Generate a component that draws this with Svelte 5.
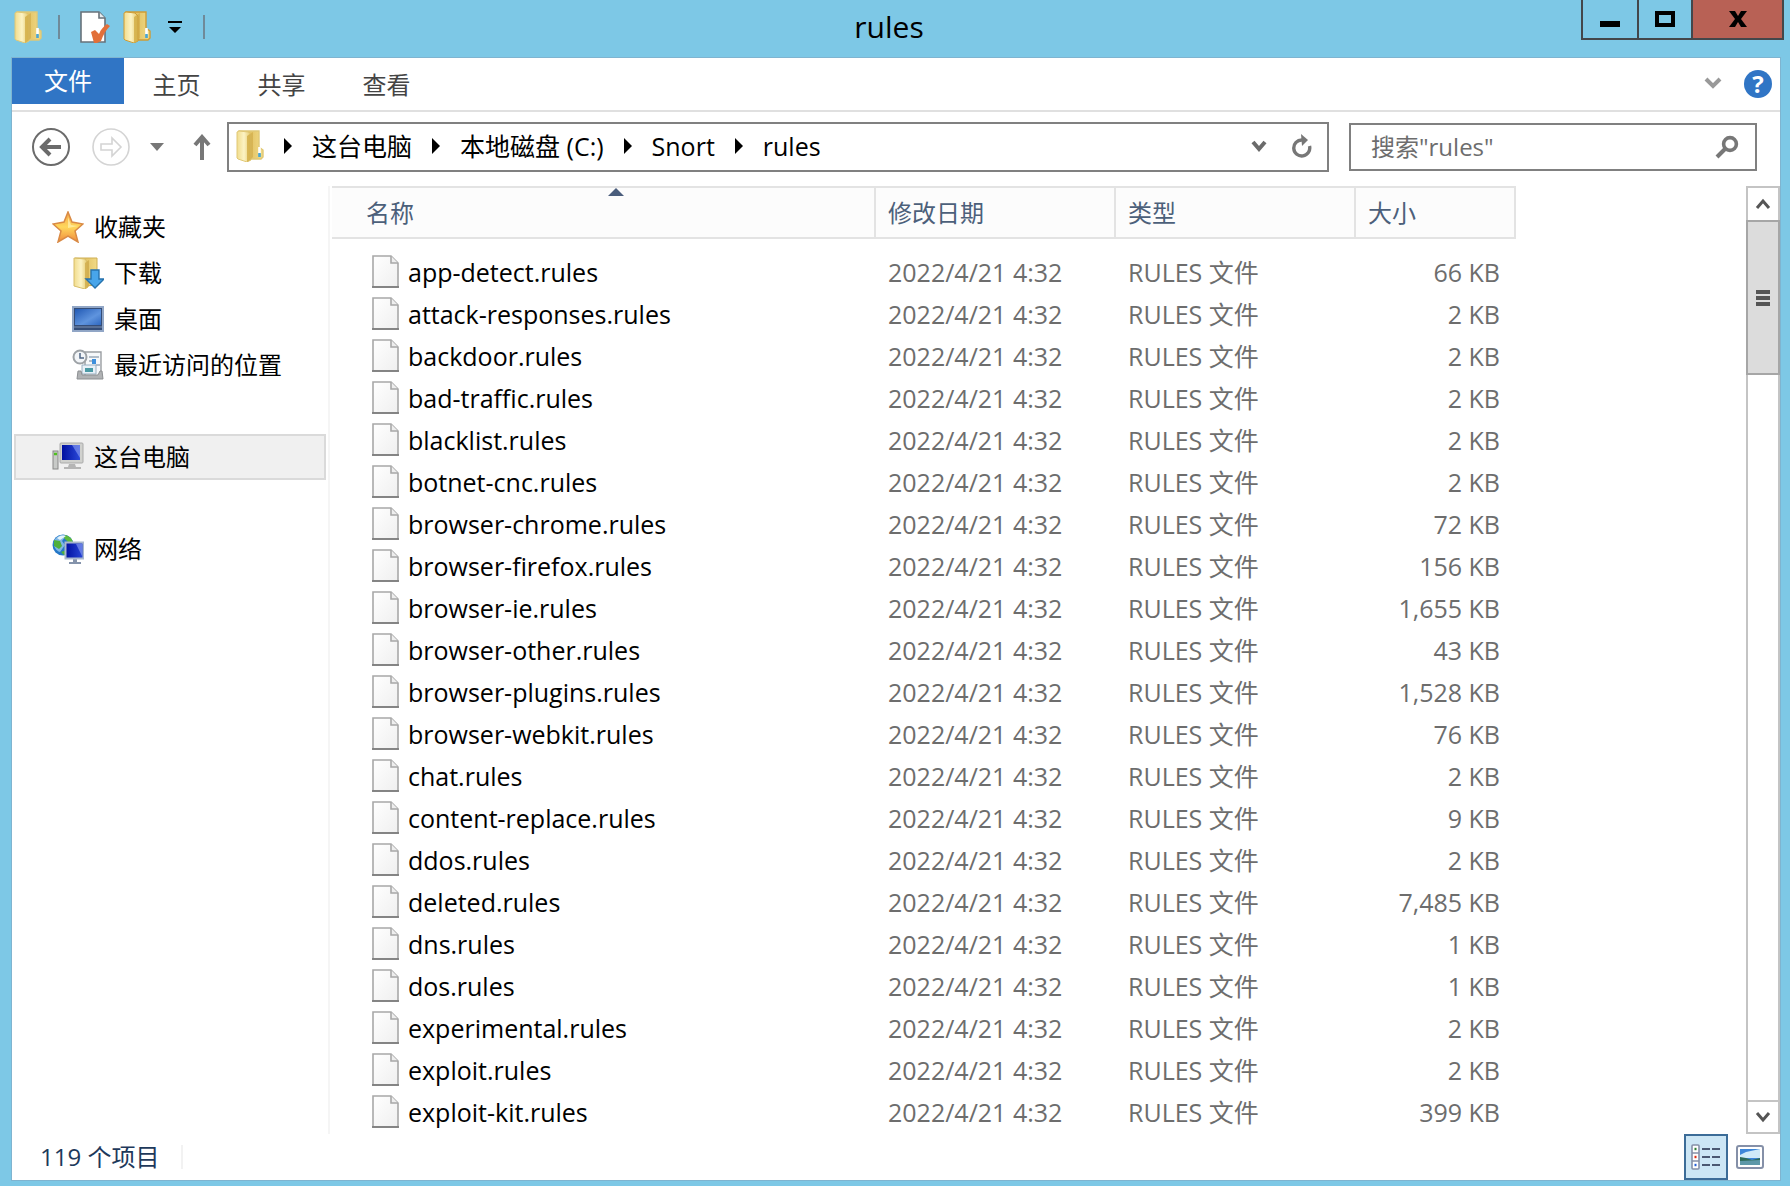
<script>
	const total = 119;
	const tabs = ["主页", "共享", "查看"];
	const path = ["这台电脑", "本地磁盘 (C:)", "Snort", "rules"];
	const views = ["details", "thumbs"];

	const groups = [
		[
			{ icon: "star", name: "收藏夹" },
			{ icon: "download", name: "下载", child: true },
			{ icon: "desktop", name: "桌面", child: true },
			{ icon: "recent", name: "最近访问的位置", child: true },
		],
		[{ icon: "computer", name: "这台电脑" }],
		[{ icon: "network", name: "网络" }],
	];

	const files = [
		["app-detect", "66"],
		["attack-responses", "2"],
		["backdoor", "2"],
		["bad-traffic", "2"],
		["blacklist", "2"],
		["botnet-cnc", "2"],
		["browser-chrome", "72"],
		["browser-firefox", "156"],
		["browser-ie", "1,655"],
		["browser-other", "43"],
		["browser-plugins", "1,528"],
		["browser-webkit", "76"],
		["chat", "2"],
		["content-replace", "9"],
		["ddos", "2"],
		["deleted", "7,485"],
		["dns", "1"],
		["dos", "1"],
		["experimental", "2"],
		["exploit", "2"],
		["exploit-kit", "399"],
	];

	let selected = $state("这台电脑");
	let view = $state("details");
	let query = $state("");

	// thumb shows how much of the folder fits in the window
	let thumb = $derived((files.length / total) * 100);
</script>

{#snippet folder(edge = "#e0c876")}
	<svg width="28" height="32" viewBox="0 0 28 32" aria-hidden="true">
		<path d="M3 1h20v16l4 3v7l-2 2H9l-6-1z" fill="url(#gold)" stroke={edge} stroke-width="1.4" />
		<path d="M1 2l2-1 9 1 3 3v25l-4 2-9-3-1-1z" fill="url(#cream)" stroke={edge} />
		<path d="M11 6l3-2v26l-3 2z" fill="#d2ac45" opacity=".8" />
		<path d="M14 4l3-2v25l-3 3z" fill="#c9a23c" opacity=".5" />
		<path d="M23.500 17v7" stroke="#fff" stroke-width="2.600" />
		<path d="M23.500 23v4" stroke="#4aa6d4" stroke-width="2.600" />
	</svg>
{/snippet}

{#snippet sideIcon(name)}
	<svg width="32" height="32" viewBox="0 0 32 32" aria-hidden="true">
		{#if name === "star"}
			<path d="M16 1l4 10 11 2-8 7 3 11-10-6-10 6 3-11-8-7 11-2z" fill="url(#amber)" stroke="#d98a45" stroke-width="1.5" />
			<path d="M16 6l3 8 7 1-10 2z" fill="#fff2b0" opacity=".7" />
		{:else if name === "download"}
			<path d="M3 1h22v27l-12 1-10-1z" fill="url(#gold)" stroke="#cfae52" />
			<path d="M2 1l11 1 3 4v24l-3 2-11-3z" fill="url(#cream)" stroke="#d8bd68" />
			<path d="M13 6l4-3v26l-4 3z" fill="#cfab4b" opacity=".8" />
			<path d="M19 13h8v9h5l-9 9-9-9h5z" fill="#48a5ea" stroke="#2672ad" stroke-width="1.4" />
		{:else if name === "desktop"}
			<rect x="1" y="4" width="30" height="24" fill="#344d78" stroke="#91a6c6" stroke-width="2" />
			<rect x="3" y="6" width="26" height="16" fill="url(#screen)" />
			<path d="M2 24h28" stroke="#7d91b0" />
		{:else if name === "recent"}
			<path d="M13 3h16v24H13z" fill="#f6f8fa" stroke="#9a9ea2" stroke-width="1.4" />
			<path d="M17 8h10M17 12h4M24 16h4" stroke="#9aa9b9" stroke-width="1.5" />
			<path d="M20 10h4v5h-4z" fill="#3d8fdc" />
			<path d="M10 16h14v9H10z" fill="#e8f1f8" stroke="#9ab0c2" />
			<path d="M13 19h8v4h-8z" fill="#4a9aa5" />
			<path d="M6 22h3l1 4h16l2-4h2l1 8H5z" fill="#b0b2b4" stroke="#8c8f92" />
			<circle cx="8" cy="8" r="6.500" fill="#f2f5f8" stroke="#9da2a6" stroke-width="2" />
			<path d="M8 4v5h4" fill="none" stroke="#4f6684" stroke-width="1.5" />
		{:else if name === "computer"}
			<rect x="1" y="10" width="5" height="18" fill="#c8cac8" stroke="#888" />
			<path d="M2 13h3" stroke="#50c020" stroke-width="2.500" />
			<path d="M17 23h6l1 3h5v2H12v-2h4z" fill="#b5b5b5" />
			<rect x="8" y="2" width="23" height="20" rx="1" fill="#d0d1ce" stroke="#aaa" />
			<rect x="10" y="4" width="18" height="15" fill="url(#navy)" />
			<path d="M20 4h8v13z" fill="#8fa4f4" opacity=".6" />
		{:else}
			<circle cx="11" cy="12" r="10.500" fill="#2578c8" />
			<path d="M2 8c3-6 9-7 12-5l-4 5 3 4-5 7C4 18 1 13 2 8z" fill="#7fb6e4" />
			<path d="M2 7l6 1 2 5-3 3-5-3zM9 19l5-2 2 4-4 1z" fill="#4fb03c" />
			<path d="M13 2c5 1 8 5 8 8l-5-1-4-4z" fill="#5cba3c" />
			<path d="M5 5c3-3 7-3 9-2l-6 4z" fill="#e4f4fb" />
			<path d="M21 26h4v3h4v2H17v-2h4z" fill="#8493ab" />
			<rect x="13.500" y="9.500" width="18" height="16" fill="url(#navy)" stroke="#a9b8cd" stroke-width="2" />
			<path d="M24 11h6v12z" fill="#8fa4f4" opacity=".6" />
		{/if}
	</svg>
{/snippet}

<svg class="defs" width="0" height="0" aria-hidden="true">
	<defs>
		<linearGradient id="gold"><stop offset="0" stop-color="#d7b04a" /><stop offset="1" stop-color="#f1da86" /></linearGradient>
		<linearGradient id="cream"><stop offset="0" stop-color="#f1dc8c" /><stop offset=".5" stop-color="#fcf3c4" /><stop offset="1" stop-color="#e2c564" /></linearGradient>
		<linearGradient id="amber" x2="0" y2="1"><stop offset="0" stop-color="#f5a54a" /><stop offset=".5" stop-color="#ffd75c" /><stop offset="1" stop-color="#f08a3c" /></linearGradient>
		<linearGradient id="screen" y2="1"><stop offset="0" stop-color="#2159b4" /><stop offset=".6" stop-color="#5f94de" /><stop offset="1" stop-color="#2f68c0" /></linearGradient>
		<linearGradient id="navy"><stop offset="0" stop-color="#0010a0" /><stop offset="1" stop-color="#2a48d8" /></linearGradient>
		<linearGradient id="paper" x2="1" y2="1"><stop offset="0" stop-color="#fff" /><stop offset="1" stop-color="#efefef" /></linearGradient>
	</defs>
</svg>

<div class="window">
	<header class="titlebar">
		<div class="quick">
			{@render folder()}
			<span class="bar"></span>
			<button class="props" aria-label="属性">
				<svg width="32" height="34" viewBox="0 0 32 34">
					<path d="M2 2h18l6 6v24H2z" fill="#fff" stroke="#68727a" stroke-width="1.6" />
					<path d="M20 2v6h6" fill="#e7edf0" stroke="#68727a" stroke-width="1.6" />
					<path d="M12 22l4-2 4 4c2-5 5-8 8-10l3 2c-4 4-7 9-9 15l-4 2h-3z" fill="#e2703a" />
				</svg>
			</button>
			<button aria-label="新建文件夹">{@render folder("#cf9c35")}</button>
			<button class="more" aria-label="自定义快速访问工具栏">
				<svg width="16" height="14" viewBox="0 0 16 14"><path d="M1 1h14v2H1zM2 7h12l-6 6z" /></svg>
			</button>
			<span class="bar"></span>
		</div>
		<h1>rules</h1>
		<div class="controls">
			<button class="min" aria-label="最小化">
				<svg width="20" height="18" viewBox="0 0 20 18"><path d="M0 11h20v6H0z" /></svg>
			</button>
			<button class="max" aria-label="最大化">
				<svg width="20" height="18" viewBox="0 0 20 18"><path d="M2 3h16v12H2z" fill="none" stroke="#000" stroke-width="4" /></svg>
			</button>
			<button class="close" aria-label="关闭">
				<svg width="20" height="18" viewBox="0 0 20 18"><path d="M1 1h6l3 5 3-5h6l-6 8 6 8h-6l-3-5-3 5H1l6-8z" /></svg>
			</button>
		</div>
	</header>

	<div class="body">
		<div class="ribbon">
			<button class="file">文件</button>
			{#each tabs as tab}
				<button class="tab">{tab}</button>
			{/each}
			<button class="expand" aria-label="展开功能区">
				<svg width="18" height="14" viewBox="0 0 18 14"><path d="M2 2l7 7 7-7" fill="none" stroke="#999" stroke-width="4" /></svg>
			</button>
			<button class="help" aria-label="帮助">?</button>
		</div>

		<div class="navbar">
			<button aria-label="后退">
				<svg width="40" height="40" viewBox="0 0 40 40" fill="none" stroke="#6b6b6b">
					<circle cx="20" cy="20" r="18" stroke-width="2" />
					<path d="M30 20H12M19 12l-8 8 8 8" stroke-width="4" />
				</svg>
			</button>
			<button class="forward" aria-label="前进" disabled>
				<svg width="40" height="40" viewBox="0 0 40 40" fill="none" stroke="#d4d4d4">
					<circle cx="20" cy="20" r="18" stroke-width="1.6" />
					<path d="M10 17h11v-6l9 9-9 9v-6H10z" stroke-width="1.6" />
				</svg>
			</button>
			<button class="history" aria-label="最近浏览的位置">
				<svg width="16" height="10" viewBox="0 0 16 10"><path d="M1 1h14L8 9z" fill="#777" /></svg>
			</button>
			<button class="up" aria-label="上移">
				<svg width="18" height="26" viewBox="0 0 18 26"><path d="M9 26V4M2 11l7-8 7 8" fill="none" stroke="#777" stroke-width="4" /></svg>
			</button>
			<nav class="address" aria-label="地址">
				{@render folder()}
				{#each path as part}
					<svg class="arrow" width="8" height="16" viewBox="0 0 8 16"><path d="M0 0l8 8-8 8z" /></svg>
					<a href="#top">{part}</a>
				{/each}
				<button class="drop" aria-label="以前的位置">
					<svg width="16" height="14" viewBox="0 0 16 14"><path d="M2 3l6 7 6-7" fill="none" stroke="#6b6b6b" stroke-width="4" /></svg>
				</button>
				<button class="refresh" aria-label="刷新">
					<svg width="22" height="24" viewBox="0 0 22 24">
						<path d="M18.500 12A8 8 0 1 1 11 6" fill="none" stroke="#777" stroke-width="3.400" />
						<path d="M10 0l7 6-6 6z" fill="#777" />
					</svg>
				</button>
			</nav>
			<div class="search">
				<input type="text" placeholder={'搜索"rules"'} aria-label="搜索" bind:value={query} />
				<svg width="24" height="24" viewBox="0 0 24 24" fill="none" stroke="#777" stroke-width="3.600">
					<circle cx="15" cy="9" r="6.400" />
					<path d="M10 14l-8 8" stroke-width="4" />
				</svg>
			</div>
		</div>

		<main>
			<aside>
				{#each groups as group}
					<div class="group">
						{#each group as item}
							<button
								class="place"
								class:child={item.child}
								class:selected={selected === item.name}
								onclick={() => (selected = item.name)}
							>
								{@render sideIcon(item.icon)}
								{item.name}
							</button>
						{/each}
					</div>
				{/each}
			</aside>

			<div class="list">
				<table>
					<colgroup>
						<col class="name" />
						<col class="date" />
						<col class="type" />
						<col class="size" />
					</colgroup>
					<thead>
						<tr>
							<th class="sorted" aria-sort="ascending">
								名称
								<svg width="16" height="8" viewBox="0 0 16 8"><path d="M0 8l8-8 8 8z" fill="#4a5d7c" /></svg>
							</th>
							<th>修改日期</th>
							<th>类型</th>
							<th>大小</th>
						</tr>
					</thead>
					<tbody>
						{#each files as [name, size]}
							<tr>
								<td>
									<div class="filename">
										<svg width="28" height="34" viewBox="0 0 28 34">
											<path d="M1 1h18l7 7v24H1z" fill="url(#paper)" stroke="#a8a8a8" stroke-width="1.6" />
											<path d="M19 1v7h7" fill="#eee" stroke="#a8a8a8" stroke-width="1.6" />
											<path d="M0 32h27" stroke="#777" stroke-width="1.6" />
										</svg>
										{name}.rules
									</div>
								</td>
								<td>2022/4/21 4:32</td>
								<td>RULES 文件</td>
								<td>{size} KB</td>
							</tr>
						{/each}
					</tbody>
				</table>
			</div>

			<div class="scroll">
				<button aria-label="向上滚动">
					<svg width="16" height="12" viewBox="0 0 16 12"><path d="M2 10l6-7 6 7" fill="none" stroke="#555" stroke-width="3" /></svg>
				</button>
				<div class="track">
					<div class="thumb" style="height: {thumb}%">
						<svg width="14" height="18" viewBox="0 0 14 18"><path d="M0 3h14M0 9h14M0 15h14" stroke="#555" stroke-width="4" /></svg>
					</div>
				</div>
				<button aria-label="向下滚动">
					<svg width="16" height="12" viewBox="0 0 16 12"><path d="M2 2l6 7 6-7" fill="none" stroke="#555" stroke-width="3" /></svg>
				</button>
			</div>
		</main>

		<footer>
			<span class="count">{total} 个项目</span>
			<div class="views">
				{#each views as v}
					<button class:active={view === v} aria-label={v} onclick={() => (view = v)}>
						{#if v === "details"}
							<svg width="32" height="28" viewBox="0 0 32 28">
								<rect x="2" y="2" width="7" height="24" rx="1" fill="#fff" stroke="#8590a8" stroke-width="1.6" />
								<path d="M2 10h7M2 18h7" stroke="#8590a8" stroke-width="1.6" />
								<path d="M4.500 6h2" stroke="#2e7d32" stroke-width="2.400" />
								<path d="M4.500 14h2" stroke="#e02b10" stroke-width="2.400" />
								<path d="M4.500 22h2" stroke="#2460d8" stroke-width="2.400" />
								<path d="M12 6h8M22 6h8M12 14h8M22 14h8M12 22h8M22 22h8" stroke="#4b5872" stroke-width="2.200" />
							</svg>
						{:else}
							<svg width="28" height="24" viewBox="0 0 28 24">
								<rect x="1" y="1" width="26" height="22" rx="2" fill="#fff" stroke="#8590a8" stroke-width="2" />
								<path d="M4 4h20v16H4z" fill="#3d86d8" />
								<path d="M4 10l6-3 14-3v9H4z" fill="#cfeaf8" />
								<path d="M4 12l6 1 6 2 8-2v3H4z" fill="#2c6a58" />
								<path d="M4 16l20-1v5H4z" fill="#5d98a8" />
							</svg>
						{/if}
					</button>
				{/each}
			</div>
		</footer>
	</div>
</div>

<style>
	:global(body) {
		margin: 0;
		background: #7dc8e6;
	}

	.window {
		box-sizing: border-box;
		display: flex;
		flex-direction: column;
		min-height: 100vh;
		padding-bottom: 6px;
		background: #7dc8e6;
		font-family: "Open Sans", "Noto Sans CJK SC", sans-serif;
		font-size: 24px;
		line-height: 32px;
		color: #000;
	}

	.defs {
		position: absolute;
	}

	svg {
		display: block;
		flex: none;
	}

	button {
		display: flex;
		align-items: center;
		justify-content: center;
		box-sizing: border-box;
		margin: 0;
		padding: 0;
		border: 0;
		background: none;
		font: inherit;
		color: inherit;
	}

	/* title bar */
	.titlebar {
		display: grid;
		grid-template-columns: 1fr auto 1fr;
		height: 58px;
		padding: 0 6px 0 14px;
	}

	.quick {
		display: flex;
		align-items: center;
		height: 54px;
	}

	.bar {
		width: 2px;
		height: 24px;
		margin: 0 19px 0 16px;
		background: #6f8a99;
	}

	.props {
		margin-right: 12px;
	}

	.more {
		margin-left: 16px;
	}

	.more + .bar {
		margin-left: 20px;
	}

	h1 {
		margin: 0;
		padding-right: 20px;
		font-size: 30px;
		font-weight: 400;
		line-height: 54px;
	}

	.controls {
		display: flex;
		justify-self: end;
		height: 40px;
		border: 2px solid #43474b;
		border-top: 0;
		box-sizing: border-box;
	}

	.controls button {
		width: 52px;
		height: 38px;
	}

	.controls .min {
		width: 56px;
		border-right: 2px solid #43474b;
	}

	.controls .close {
		width: 91px;
		border-left: 2px solid #43474b;
		background: #b86155;
	}

	.body {
		display: flex;
		flex: 1;
		flex-direction: column;
		margin: 0 10px 0 12px;
		background: #fff;
		box-shadow: 0 0 0 1px #7fb4d0;
	}

	/* ribbon */
	.ribbon {
		display: flex;
		align-items: center;
		height: 52px;
		border-bottom: 2px solid #e0e0e0;
		color: #444;
	}

	.file {
		align-self: flex-start;
		width: 112px;
		height: 46px;
		background: #3075c5;
		color: #fff;
	}

	.tab {
		width: 105px;
		height: 52px;
		padding-top: 2px;
	}

	.expand {
		margin-left: auto;
	}

	.help {
		width: 28px;
		height: 28px;
		margin: 0 8px 0 22px;
		border-radius: 50%;
		background: #3075c5;
		color: #fff;
		font-weight: 700;
	}

	/* navigation */
	.navbar {
		display: flex;
		align-items: center;
		height: 70px;
		padding: 0 23px 4px 19px;
	}

	.forward {
		margin-left: 20px;
	}

	.history {
		margin-left: 18px;
	}

	.up {
		margin: 0 16px 0 28px;
	}

	.address,
	.search {
		display: flex;
		align-items: center;
		box-sizing: border-box;
		height: 50px;
		border: 2px solid #808080;
		background: #fff;
	}

	.address {
		flex: 1;
		padding: 0 14px 2px 7px;
		font-size: 25px;
	}

	.address a {
		color: #000;
		text-decoration: none;
		white-space: nowrap;
	}

	.arrow {
		margin: 0 20px;
	}

	.drop {
		margin-left: auto;
	}

	.refresh {
		margin-left: 24px;
	}

	.search {
		width: 408px;
		height: 48px;
		margin-left: 20px;
		padding: 0 16px 0 20px;
	}

	.search input {
		flex: 1;
		min-width: 0;
		padding: 0;
		border: 0;
		outline: 0;
		background: none;
		font: inherit;
	}

	.search input::placeholder {
		color: #6d6d6d;
		opacity: 1;
	}

	/* places */
	main {
		display: flex;
		flex: 1;
	}

	aside {
		box-sizing: border-box;
		width: 318px;
		padding: 18px 2px 0;
		border-right: 2px solid #f5f5f5;
	}

	.group {
		margin-bottom: 46px;
	}

	.place {
		justify-content: flex-start;
		gap: 10px;
		width: 100%;
		height: 46px;
		padding-left: 36px;
		border: 2px solid transparent;
	}

	.child {
		padding-left: 56px;
	}

	.selected {
		border-color: #dadada;
		background: #f0f0f0;
	}

	/* file list */
	.list {
		flex: 1;
		padding-left: 2px;
	}

	table {
		width: 1184px;
		table-layout: fixed;
		border-spacing: 0;
	}

	.name {
		width: 544px;
	}

	.date,
	.type {
		width: 240px;
	}

	.size {
		width: 160px;
	}

	th {
		box-sizing: border-box;
		height: 53px;
		padding: 0 12px;
		border: 2px solid #e3e3e3;
		border-left: 0;
		background: #fcfcfc;
		color: #4c607a;
		font-weight: 400;
		text-align: left;
	}

	.sorted {
		position: relative;
		padding-left: 34px;
	}

	.sorted svg {
		position: absolute;
		top: 0;
		left: 51%;
	}

	tbody::before {
		content: "";
		display: block;
		height: 12px;
	}

	td {
		height: 42px;
		padding: 0 12px;
		color: #6d6d6d;
		font-size: 25px;
		white-space: nowrap;
	}

	td:first-child {
		padding-left: 40px;
		color: #000;
	}

	td:last-child {
		padding-right: 16px;
		text-align: right;
	}

	.filename {
		display: flex;
		align-items: center;
		gap: 8px;
	}

	/* scroll bar */
	.scroll {
		display: flex;
		flex-direction: column;
		box-sizing: border-box;
		width: 34px;
		border: 2px solid #c4c4c4;
	}

	.scroll button {
		height: 32px;
	}

	.scroll button:last-child {
		border-top: 2px solid #c4c4c4;
	}

	.track {
		flex: 1;
	}

	.thumb {
		display: flex;
		align-items: center;
		justify-content: center;
		box-sizing: border-box;
		margin: 0 -2px;
		border: 2px solid #a6a6a6;
		background: #dcdcdc;
	}

	/* status bar */
	footer {
		display: flex;
		align-items: center;
		justify-content: space-between;
		height: 46px;
		padding: 0 8px 0 28px;
		color: #1e395b;
	}

	.count {
		padding-right: 22px;
		border-right: 2px solid #f2f2f2;
		line-height: 24px;
	}

	.views {
		display: flex;
	}

	.views button {
		width: 44px;
		height: 46px;
	}

	.views .active {
		border: 2px solid #3c6c98;
		background: #cce6f5;
	}
</style>
